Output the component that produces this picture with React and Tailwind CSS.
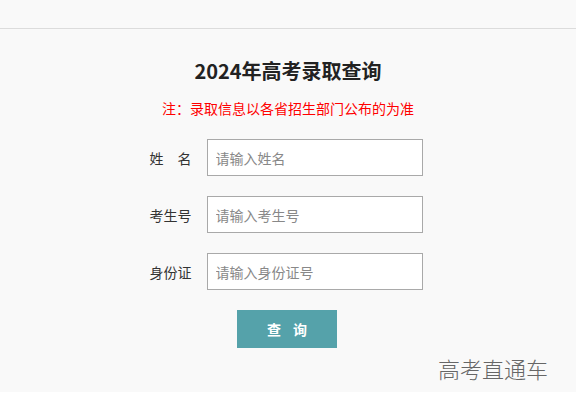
import React from "react";

const font = { fontFamily: '"Noto Sans CJK SC", "Noto Sans", sans-serif' };

function Row({ label, placeholder }) {
  return (
    <div className="flex items-center">
      <div className="w-[57px] text-[14px] text-[#333] leading-none">{label}</div>
      <input
        className="w-[216px] h-[37px] bg-white border border-[#a9a9a9] px-[8px] text-[14px] text-[#333] placeholder:text-[#888] outline-none"
        placeholder={placeholder}
      />
    </div>
  );
}

export default function App() {
  return (
    <div className="w-[576px] h-[408px] bg-white relative overflow-hidden" style={font}>
      <div className="h-[392px] bg-[#f9f9f9] flex flex-col">
        <div className="h-[29px] border-b border-[#dcdcdc]"></div>
        <div className="flex flex-col items-center">
          <h1 className="mt-[28px] text-[20px] leading-[28px] font-bold text-[#222]">2024年高考录取查询</h1>
          <p className="mt-[13px] text-[14px] leading-[20px] text-[#f00]">注：录取信息以各省招生部门公布的为准</p>
          <div className="mt-[21px] flex flex-col gap-[20px] ml-[-4px]">
            <Row label="姓　名" placeholder="请输入姓名" />
            <Row label="考生号" placeholder="请输入考生号" />
            <Row label="身份证" placeholder="请输入身份证号" />
          </div>
          <button className="mt-[20px] ml-[-2px] w-[100px] h-[38px] bg-[#55a2aa] text-white text-[14px] font-bold tracking-[12px] pl-[12px]">
            查询
          </button>
        </div>
      </div>
      <div className="absolute left-[438px] top-[354px] text-[22px] leading-[28px] text-[#666] font-light">
        高考直通车
      </div>
    </div>
  );
}
